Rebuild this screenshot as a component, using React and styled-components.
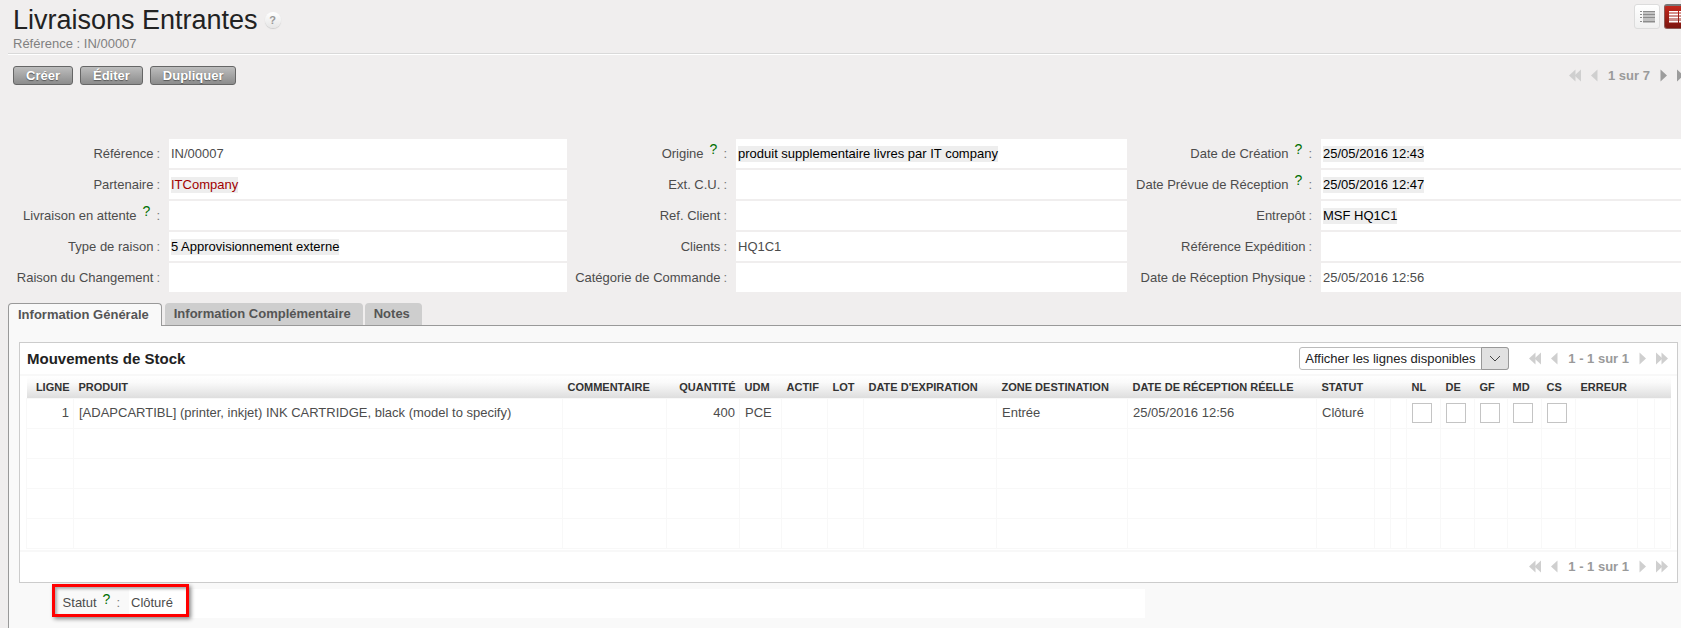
import React, { useState } from 'react';
import styled, { createGlobalStyle, css } from 'styled-components';

const GlobalStyle = createGlobalStyle`
  * {
    box-sizing: border-box;
  }

  body {
    margin: 0;
    background: #f0eeee;
    color: #4c4c4c;
    font-family: "Liberation Sans", Arial, sans-serif;
    font-size: 13px;
    line-height: 16px;
    overflow: hidden;
  }
`;

const Page = styled.main`
  padding-left: 8px;
`;

const Header = styled.header`
  display: flex;
  justify-content: space-between;
  height: 54px;
  padding: 4px 0 0 5px;
  border-bottom: 1px solid #d9d9d9;
  box-shadow: 0 1px 0 #fff;
  overflow: hidden;
`;

const TitleLine = styled.div`
  display: flex;
  align-items: center;
  gap: 7px;
  height: 32px;
`;

const Title = styled.h1`
  margin: 0;
  color: #222;
  font-size: 27px;
  font-weight: normal;
  line-height: 32px;
`;

const HelpButton = styled.button`
  width: 16px;
  height: 16px;
  padding: 0;
  border: 0;
  border-radius: 50%;
  background: linear-gradient(#fff, #e6e6e6);
  box-shadow: 0 1px 1px #ccc;
  color: #999;
  font: bold 11px/16px "Liberation Sans", Arial, sans-serif;
`;

const Reference = styled.div`
  color: #808080;
`;

const Views = styled.div`
  display: flex;
  flex: none;
  gap: 4px;
  width: 47px;
`;

const ViewButton = styled.button`
  display: flex;
  flex: none;
  align-items: center;
  justify-content: center;
  width: 26px;
  height: 25px;
  padding: 0;
  border: 1px solid #dcdcdc;
  border-radius: 3px;
  background: linear-gradient(#fff, #f0f0f0);
  color: #8c8c8c;

  ${({ $active }) => $active && css`
    border-color: #8d5c58;
    border-top: 2px solid #777;
    background: linear-gradient(#c4271c, #7c1610);
    color: #fff;
  `}
`;

const Toolbar = styled.div`
  display: flex;
  justify-content: space-between;
  align-items: center;
  height: 43px;
  padding-left: 5px;
`;

const Actions = styled.div`
  display: flex;
  gap: 7px;
`;

const ActionButton = styled.button`
  height: 19px;
  padding: 0 12px;
  border: 1px solid #666;
  border-radius: 3px;
  background: linear-gradient(#bdbdbd, #8c8c8c);
  color: #fff;
  font: bold 13px/17px "Liberation Sans", Arial, sans-serif;
  text-shadow: 0 1px 1px #555;
`;

const PagerBox = styled.nav`
  display: flex;
  flex: none;
  align-items: center;
  gap: 10px;
  color: #9a9a9a;
  font-weight: bold;
  white-space: nowrap;
`;

const MainPager = styled.div`
  width: 112px;
`;

const PagerButton = styled.button`
  display: flex;
  padding: 0;
  border: 0;
  background: none;
  color: ${({ $on }) => ($on ? '#9c9c9c' : '#cfcfcf')};
`;

const Fields = styled.div`
  display: grid;
  grid-template-columns: 161px 398fr 169px 391fr 194px 360fr;
  grid-auto-rows: 29px;
  row-gap: 2px;
  padding: 42px 0 11px;
`;

const Label = styled.label`
  display: flex;
  justify-content: flex-end;
  align-items: center;
  gap: 3px;
  padding-right: 9px;
  white-space: nowrap;
`;

const Colon = styled.span`
  color: #777;
`;

const HelpMark = styled.sup`
  align-self: flex-start;
  padding: 2px 3px 0;
  color: #006e00;
  font-size: 14px;
  line-height: 16px;
`;

const Value = styled.output`
  display: flex;
  align-items: center;
  padding-left: 2px;
  background: #fff;
  white-space: nowrap;
`;

const Marked = styled.span`
  background: #eee;
  color: #000;
`;

const PartnerLink = styled.a`
  background: #eee;
  color: #a00000;
  text-decoration: none;
`;

const Tabs = styled.div`
  display: flex;
  gap: 2px;
`;

const Tab = styled.button`
  height: 22px;
  padding: 0 12px 0 9px;
  border: 0;
  border-radius: 4px 4px 0 0;
  background: #cecece;
  color: #555;
  font: bold 13px/22px "Liberation Sans", Arial, sans-serif;

  ${({ $active }) => $active && css`
    height: 23px;
    margin: 0 1px -1px 0;
    border: 1px solid #999;
    border-bottom: 0;
    background: #f9f9f9;
    z-index: 1;
  `}
`;

const TabPanel = styled.section`
  min-height: 303px;
  padding: 16px 3px 0 10px;
  border: solid #999;
  border-width: 1px 0 0 1px;
  background: #f9f9f9;
`;

const Panel = styled.div`
  border: 1px solid #ccc;
  background: #fff;
`;

const PanelBar = styled.div`
  display: flex;
  justify-content: space-between;
  align-items: center;
  height: 33px;
  padding: 0 9px 0 7px;
  border-bottom: 2px solid #f8f8f8;
`;

const PanelFooter = styled.div`
  display: flex;
  justify-content: flex-end;
  align-items: center;
  height: 32px;
  margin-top: 1px;
  padding-right: 9px;
  border-top: 2px solid #f8f8f8;
`;

const PanelTitle = styled.h2`
  margin: 0;
  color: #222;
  font-size: 15px;
`;

const PanelTools = styled.div`
  display: flex;
  align-items: center;
  gap: 20px;
`;

const SelectBox = styled.div`
  display: grid;
  grid-template-columns: 1fr 26px;
  width: 210px;
  height: 23px;
  border: 1px solid #bbb;
  border-radius: 3px;
  background: #fff;
`;

const LineSelect = styled.select`
  grid-area: 1 / 1 / 2 / 3;
  appearance: none;
  padding: 0 0 0 5px;
  border: 0;
  background: none;
  color: #222;
  font: 13px "Liberation Sans", Arial, sans-serif;
`;

const SelectArrow = styled.span`
  grid-area: 1 / 2;
  display: flex;
  align-items: center;
  justify-content: center;
  margin: -1px;
  border: 1px solid #999;
  border-radius: 0 3px 3px 0;
  background: #e1e1e1;
  pointer-events: none;
`;

const TableWrap = styled.div`
  padding: 0 6px;
`;

const Table = styled.table`
  width: 100%;
  border-collapse: collapse;
  table-layout: fixed;
`;

const HeadRow = styled.tr`
  height: 22px;
  background: linear-gradient(#fff, #fafafa 30%, #dedede);
`;

const Th = styled.th`
  padding: 0 4px 0 5px;
  color: #333;
  font-size: 11px;
  text-align: ${({ $right }) => ($right ? 'right' : 'left')};
  white-space: nowrap;
`;

const Row = styled.tr`
  height: 30px;
`;

const Td = styled.td`
  padding: 0 4px 0 5px;
  border: 1px solid #f8f8f8;
  text-align: ${({ $right }) => ($right ? 'right' : 'left')};
  white-space: nowrap;
`;

const Check = styled.input`
  display: block;
  appearance: none;
  width: 20px;
  height: 20px;
  margin: 0;
  border: 1px solid #c4c4c4;
  background: #fff;
`;

const StatusRow = styled.div`
  display: grid;
  grid-template-columns: 100px minmax(0, 1016px);
  height: 29px;
  margin: 6px 0 0 10px;
`;

const StatusFrame = styled.div`
  grid-area: 1 / 1 / 2 / 3;
  width: 137px;
  height: 33px;
  margin: -5px 0 0 23px;
  border: 3px solid #f00;
  box-shadow: 2px 2px 4px #888, inset 2px 2px 3px #aaa;
  z-index: 1;
`;

const StatusLabel = styled(Label)`
  grid-area: 1 / 1;
`;

const StatusValue = styled(Value)`
  grid-area: 1 / 2;
`;

const fields = [
  { id: 'ref', label: 'Référence', value: 'IN/00007' },
  { id: 'origin', label: 'Origine', help: true, value: 'produit supplementaire livres par IT company', marked: true },
  { id: 'created', label: 'Date de Création', help: true, value: '25/05/2016 12:43', marked: true },
  { id: 'partner', label: 'Partenaire', value: 'ITCompany', link: true },
  { id: 'ext', label: 'Ext. C.U.' },
  { id: 'planned', label: 'Date Prévue de Réception', help: true, value: '25/05/2016 12:47', marked: true },
  { id: 'backorder', label: 'Livraison en attente', help: true },
  { id: 'clientref', label: 'Ref. Client' },
  { id: 'warehouse', label: 'Entrepôt', value: 'MSF HQ1C1', marked: true },
  { id: 'reason', label: 'Type de raison', value: '5 Approvisionnement externe', marked: true },
  { id: 'clients', label: 'Clients', value: 'HQ1C1' },
  { id: 'shipref', label: 'Référence Expédition' },
  { id: 'change', label: 'Raison du Changement' },
  { id: 'category', label: 'Catégorie de Commande' },
  { id: 'physical', label: 'Date de Réception Physique', value: '25/05/2016 12:56' },
];

const columns = [
  { title: 'LIGNE', width: 47, right: true, value: '1' },
  { title: 'PRODUIT', value: '[ADAPCARTIBL] (printer, inkjet) INK CARTRIDGE, black (model to specify)' },
  { title: 'COMMENTAIRE', width: 104 },
  { title: 'QUANTITÉ', width: 73, right: true, value: '400' },
  { title: 'UDM', width: 42, value: 'PCE' },
  { title: 'ACTIF', width: 46 },
  { title: 'LOT', width: 36 },
  { title: "DATE D'EXPIRATION", width: 133 },
  { title: 'ZONE DESTINATION', width: 131, value: 'Entrée' },
  { title: 'DATE DE RÉCEPTION RÉELLE', width: 189, value: '25/05/2016 12:56' },
  { title: 'STATUT', width: 58, value: 'Clôturé' },
  { title: '', width: 16 },
  { title: '', width: 16 },
  { title: 'NL', width: 34, check: true },
  { title: 'DE', width: 34, check: true },
  { title: 'GF', width: 33, check: true },
  { title: 'MD', width: 34, check: true },
  { title: 'CS', width: 34, check: true },
  { title: 'ERREUR', width: 62 },
  { title: '', width: 17 },
  { title: '', width: 16 },
];

const tabs = ['Information Générale', 'Information Complémentaire', 'Notes'];

const Arrow = ({ double, flip }) => (
  <svg width={double ? 12 : 7} height="13" viewBox={double ? '0 0 12 13' : '0 0 7 13'} fill="currentColor">
    <g transform={flip ? `translate(${double ? 12 : 7} 0) scale(-1 1)` : undefined}>
      <path d="M0 6.5 6.5 0.5v12z" />
      {double && <path d="M5.5 6.5 12 0.5v12z" />}
    </g>
  </svg>
);

const Pager = ({ text, next }) => (
  <PagerBox aria-label="Pagination">
    <PagerButton aria-label="Premier"><Arrow double /></PagerButton>
    <PagerButton aria-label="Précédent"><Arrow /></PagerButton>
    <span>{text}</span>
    <PagerButton aria-label="Suivant" $on={next}><Arrow flip /></PagerButton>
    <PagerButton aria-label="Dernier" $on={next}><Arrow double flip /></PagerButton>
  </PagerBox>
);

const ListIcon = () => (
  <svg width="15" height="12" viewBox="0 0 15 12" fill="currentColor">
    <rect x="3" width="12" height="12" opacity="0.5" />
    {[0, 3, 6, 10].map((y) => (
      <g key={y}>
        <rect y={y} width="2" height="1" />
        <rect x="3" y={y} width="12" height="1" />
      </g>
    ))}
  </svg>
);

const FormIcon = () => (
  <svg width="16" height="12" viewBox="0 0 16 12" fill="currentColor">
    <rect width="9" height="12" opacity="0.5" />
    <rect x="10" width="6" height="12" opacity="0.5" />
    {[0, 3, 6, 10].map((y) => (
      <g key={y}>
        <rect y={y} width="9" height="1" />
        <rect x="10" y={y} width="6" height="1" />
      </g>
    ))}
  </svg>
);

const FieldValue = ({ field }) => {
  if (field.link) return <PartnerLink href="#partner">{field.value}</PartnerLink>;
  if (field.marked) return <Marked>{field.value}</Marked>;
  return field.value || null;
};

const App = () => {
  const [activeTab, setActiveTab] = useState(0);

  return (
    <Page>
      <GlobalStyle />
      <Header>
        <div>
          <TitleLine>
            <Title>Livraisons Entrantes</Title>
            <HelpButton>?</HelpButton>
          </TitleLine>
          <Reference>Référence : IN/00007</Reference>
        </div>
        <Views>
          <ViewButton aria-label="Liste"><ListIcon /></ViewButton>
          <ViewButton aria-label="Formulaire" $active><FormIcon /></ViewButton>
        </Views>
      </Header>
      <Toolbar>
        <Actions>
          <ActionButton>Créer</ActionButton>
          <ActionButton>Éditer</ActionButton>
          <ActionButton>Dupliquer</ActionButton>
        </Actions>
        <MainPager>
          <Pager text="1 sur 7" next />
        </MainPager>
      </Toolbar>
      <Fields>
        {fields.map((field) => (
          <React.Fragment key={field.id}>
            <Label htmlFor={field.id}>
              {field.label}
              {field.help && <HelpMark>?</HelpMark>}
              <Colon>:</Colon>
            </Label>
            <Value id={field.id}><FieldValue field={field} /></Value>
          </React.Fragment>
        ))}
      </Fields>
      <Tabs role="tablist">
        {tabs.map((tab, index) => (
          <Tab
            key={tab}
            role="tab"
            aria-selected={index === activeTab}
            $active={index === activeTab}
            onClick={() => setActiveTab(index)}
          >
            {tab}
          </Tab>
        ))}
      </Tabs>
      <TabPanel>
        <Panel>
          <PanelBar>
            <PanelTitle>Mouvements de Stock</PanelTitle>
            <PanelTools>
              <SelectBox>
                <LineSelect aria-label="Filtre des lignes">
                  <option>Afficher les lignes disponibles</option>
                </LineSelect>
                <SelectArrow>
                  <svg width="12" height="7" viewBox="0 0 12 7" fill="none" stroke="#444">
                    <path d="M1 1l5 5 5-5" />
                  </svg>
                </SelectArrow>
              </SelectBox>
              <Pager text="1 - 1 sur 1" />
            </PanelTools>
          </PanelBar>
          <TableWrap>
            <Table>
              <colgroup>
                {columns.map((column, index) => <col key={index} width={column.width} />)}
              </colgroup>
              <thead>
                <HeadRow>
                  {columns.map((column, index) => (
                    <Th key={index} $right={column.right}>{column.title}</Th>
                  ))}
                </HeadRow>
              </thead>
              <tbody>
                {[0, 1, 2, 3, 4].map((row) => (
                  <Row key={row}>
                    {columns.map((column, index) => (
                      <Td key={index} $right={column.right}>
                        {row === 0 && (column.check
                          ? <Check type="checkbox" aria-label={column.title} />
                          : column.value)}
                      </Td>
                    ))}
                  </Row>
                ))}
              </tbody>
            </Table>
          </TableWrap>
          <PanelFooter>
            <Pager text="1 - 1 sur 1" />
          </PanelFooter>
        </Panel>
        <StatusRow>
          <StatusLabel htmlFor="status">
            Statut
            <HelpMark>?</HelpMark>
            <Colon>:</Colon>
          </StatusLabel>
          <StatusValue id="status">Clôturé</StatusValue>
          <StatusFrame />
        </StatusRow>
      </TabPanel>
    </Page>
  );
};

export default App;
